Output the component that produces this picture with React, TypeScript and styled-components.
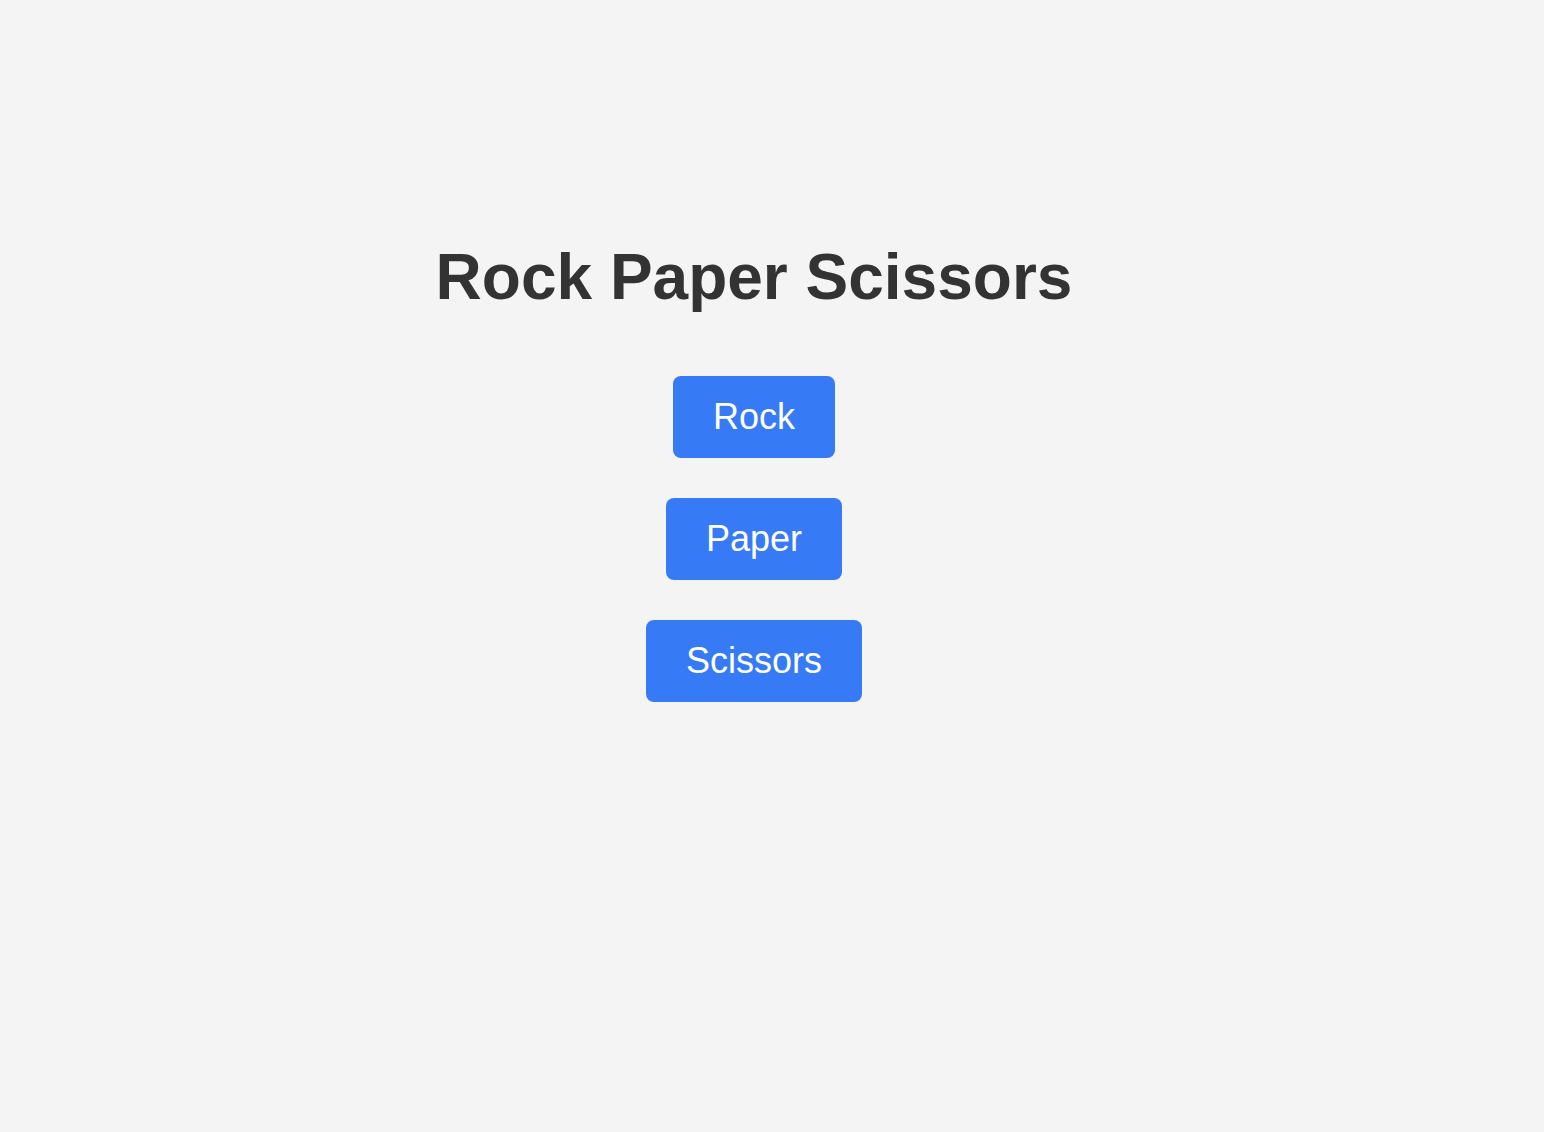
import React, { useState } from "react";
import styled, { createGlobalStyle } from "styled-components";

const GlobalStyle = createGlobalStyle`
  html, body {
    margin: 0;
    padding: 0;
    background-color: #f4f4f4;
  }
  body {
    font-family: "Liberation Sans", Arial, sans-serif;
  }
`;

const Root = styled.div`
  display: flex;
  flex-direction: column;
  align-items: center;
  min-height: 100vh;
  box-sizing: border-box;
  padding: 240px 36px 0 0;
`;

const Title = styled.h1`
  margin: 0 0 62px;
  font-size: 64px;
  font-weight: bold;
  color: #333333;
`;

const Choices = styled.div`
  display: flex;
  flex-direction: column;
  align-items: center;
  gap: 40px;
`;

const ChoiceButton = styled.button`
  font-family: "Liberation Sans", Arial, sans-serif;
  font-size: 36px;
  padding: 20px 40px;
  border: none;
  border-radius: 8px;
  background-color: #377af6;
  color: white;
  cursor: pointer;
`;

const choices = ["Rock", "Paper", "Scissors"];

export default function App() {
  const [, setPick] = useState<string | null>(null);
  return (
    <>
      <GlobalStyle />
      <Root>
        <Title>Rock Paper Scissors</Title>
        <Choices>
          {choices.map((c) => (
            <ChoiceButton key={c} onClick={() => setPick(c)}>
              {c}
            </ChoiceButton>
          ))}
        </Choices>
      </Root>
    </>
  );
}
